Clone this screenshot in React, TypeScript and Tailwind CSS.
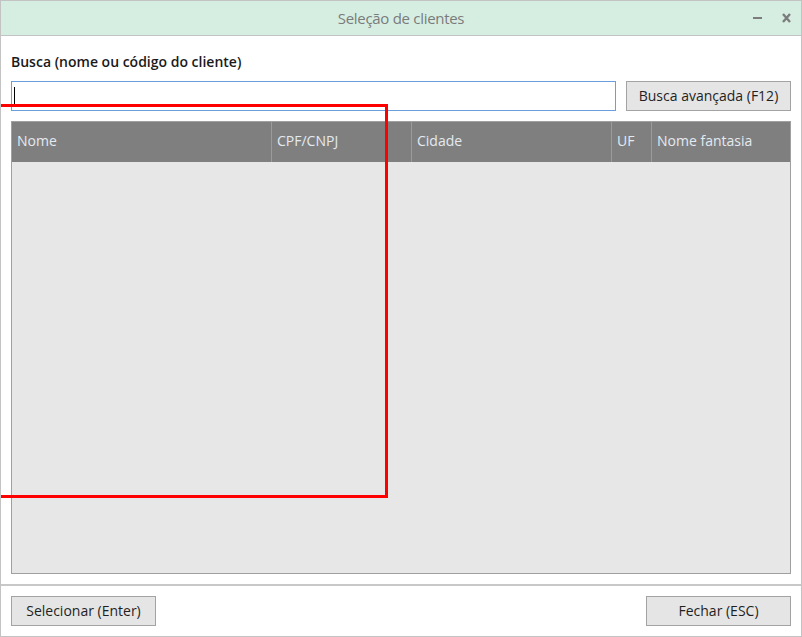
const columns = [
  { label: "Nome", width: "w-[259px]" },
  { label: "CPF/CNPJ", width: "w-[140px]" },
  { label: "Cidade", width: "w-[200px]" },
  { label: "UF", width: "w-[40px]" },
  { label: "Nome fantasia", width: "flex-1" },
];

const App = () => {
  return (
    <div className="relative flex flex-col w-[802px] h-[637px] overflow-hidden bg-white border border-[#c3c3c3] font-['Open_Sans','Noto_Sans',sans-serif] text-[14px] text-[#1f1f1f]">
      {/* title bar */}
      <div className="relative flex items-center justify-center h-[35px] shrink-0 bg-[#d6eee2] border-b border-[#c3c3c3]">
        <span className="text-[#7b7b7b] text-[15px] tracking-[-0.3px]">
          Seleção de clientes
        </span>
        <div className="absolute right-[10px] top-0 h-full flex items-center gap-[20px]">
          <svg width="9" height="10" viewBox="0 0 9 10">
            <rect x="0" y="4" width="9" height="2" fill="#7c7c7c" />
          </svg>
          <svg width="9" height="10" viewBox="0 0 9 10">
            <path d="M1 1 L8 9 M8 1 L1 9" stroke="#7c7c7c" strokeWidth="2.4" />
          </svg>
        </div>
      </div>

      {/* content */}
      <div className="flex flex-col flex-1 px-[10px] pt-[16px] pb-[10px]">
        <label className="font-semibold text-[14px] leading-[20px] text-[#1a1a1a]">
          Busca (nome ou código do cliente)
        </label>
        <div className="flex gap-[10px] mt-[9px]">
          <div className="flex items-center flex-1 h-[30px] border border-[#6a9fdb] bg-white pl-[2px]">
            <div className="w-px h-[18px] bg-black" />
          </div>
          <button className="w-[165px] h-[30px] bg-[#e5e5e5] border border-[#a3a3a3] text-[#1f1f1f] leading-[26px]">
            Busca avançada (F12)
          </button>
        </div>

        {/* table */}
        <div className="flex flex-col flex-1 mt-[10px] border border-[#a0a0a0] bg-[#e7e7e7]">
          <div className="flex h-[40px] bg-[#7f7f7f] text-[#e4eaf1] leading-[36px]">
            {columns.map((c, i) => (
              <div
                key={c.label}
                className={`flex items-center pl-[5px] pb-[2px] ${c.width} ${i > 0 ? "border-l border-[#9b9b9b]" : ""}`}
              >
                {c.label}
              </div>
            ))}
          </div>
          <div className="flex-1" />
        </div>
      </div>

      {/* footer */}
      <div className="flex justify-between h-[52px] shrink-0 px-[10px] pt-[10px] border-t-2 border-[#c8c8c8]">
        <button className="w-[145px] h-[30px] pb-[2px] bg-[#e5e5e5] border border-[#a3a3a3] text-[#1f1f1f]">
          Selecionar (Enter)
        </button>
        <button className="w-[145px] h-[30px] pb-[2px] bg-[#e5e5e5] border border-[#a3a3a3] text-[#1f1f1f]">
          Fechar (ESC)
        </button>
      </div>

      {/* annotation box */}
      <div className="absolute left-[-10px] top-[103px] w-[397px] h-[394px] border-[3px] border-[#ff0000] pointer-events-none" />
    </div>
  );
};

export default App;
